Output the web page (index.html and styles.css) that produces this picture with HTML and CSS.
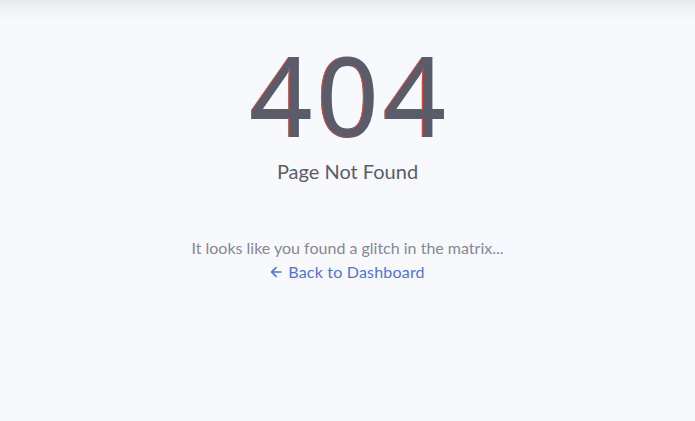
FILE: index.html
```html
<!DOCTYPE html>
<html lang="en">
<head>
<meta charset="utf-8">
<title>404</title>
<link rel="stylesheet" href="styles.css">
</head>
<body>
<div class="topshadow"></div>
<main class="content">
  <div class="error">404</div>
  <p class="lead">Page Not Found</p>
  <p class="msg">It looks like you found a glitch in the matrix...</p>
  <a class="back" href="#"><svg class="arrow" viewBox="0 0 12 12" width="12" height="12" aria-hidden="true"><path d="M11 6H1.8M6 1.6L1.6 6 6 10.4" fill="none" stroke="currentColor" stroke-width="1.7" stroke-linecap="round" stroke-linejoin="round"/></svg>Back to Dashboard</a>
</main>
</body>
</html>
```

FILE: styles.css
```css
html, body {
  margin: 0;
  padding: 0;
}
body {
  background: #f8f9fc;
  font-family: "Lato", "Open Sans", sans-serif;
  height: 421px;
  overflow: hidden;
}
.topshadow {
  height: 22px;
  background: linear-gradient(to bottom, #e9eaee 0%, #f1f2f6 45%, #f8f9fc 100%);
}
.content {
  display: flex;
  flex-direction: column;
  align-items: center;
  text-align: center;
}
.error {
  font-family: "Open Sans", sans-serif;
  font-size: 108px;
  line-height: 108px;
  color: #5a5c69;
  margin-top: 19px;
  -webkit-text-stroke: 2px #5a5c69;
  paint-order: stroke fill;
  text-shadow: -1px 0 #e74a3b;
  letter-spacing: 5px;
  padding-left: 5px;
}
.lead {
  margin: 10px 0 0;
  font-size: 20px;
  color: #5a5c69;
}
.msg {
  margin: 53px 0 0;
  font-size: 16px;
  color: #858796;
  line-height: 24px;
}
.back {
  display: inline-flex;
  align-items: center;
  gap: 6px;
  font-size: 16px;
  line-height: 24px;
  letter-spacing: 0.2px;
  color: #4e73df;
  text-decoration: none;
}
.arrow {
  flex: none;
}
```
